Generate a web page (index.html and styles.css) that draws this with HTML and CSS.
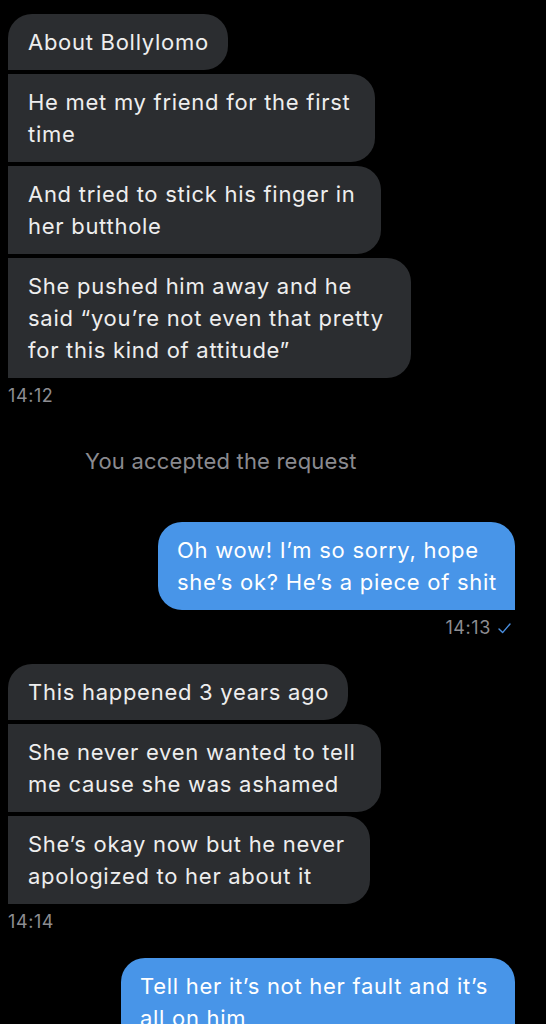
FILE: index.html
```html
<!DOCTYPE html>
<html>
<head>
<meta charset="utf-8">
<link rel="stylesheet" href="styles.css">
</head>
<body>
<div class="chat">
  <div class="group in">
    <div class="bubble first">About Bollylomo</div>
    <div class="bubble multi">He met my friend for the first<br>time</div>
    <div class="bubble multi">And tried to stick his finger in<br>her butthole</div>
    <div class="bubble multi wide last">She pushed him away and he<br>said “you’re not even that pretty<br>for this kind of attitude”</div>
  </div>
  <div class="time">14:12</div>

  <div class="system">You accepted the request</div>

  <div class="group out">
    <div class="bubble">Oh wow! I’m so sorry, hope<br>she’s ok? He’s a piece of shit</div>
  </div>
  <div class="time out-time">14:13
    <svg class="check" width="13" height="11" viewBox="0 0 13 11"><path d="M1 6 L4.6 9.6 L12 1" fill="none" stroke="#4a8fe0" stroke-width="1.4" stroke-linecap="round" stroke-linejoin="round"/></svg>
  </div>

  <div class="group in gap-top">
    <div class="bubble first">This happened 3 years ago</div>
    <div class="bubble multi">She never even wanted to tell<br>me cause she was ashamed</div>
    <div class="bubble multi last">She’s okay now but he never<br>apologized to her about it</div>
  </div>
  <div class="time">14:14</div>

  <div class="group out gap-top">
    <div class="bubble multi">Tell her it’s not her fault and it’s<br>all on him</div>
  </div>
</div>
</body>
</html>
```

FILE: styles.css
```css
html, body {
  margin: 0;
  padding: 0;
  background: #000;
}
body {
  font-family: Inter, "Noto Sans", sans-serif;
  color: #f2f2f2;
  width: 546px;
  height: 1024px;
  overflow: hidden;
}
.chat {
  display: flex;
  flex-direction: column;
  padding-top: 14px;
}
.group {
  display: flex;
  flex-direction: column;
  gap: 4px;
}
.group.in {
  align-items: flex-start;
  padding-left: 8px;
}
.group.out {
  align-items: flex-end;
  padding-right: 31px;
  margin-top: 45px;
}
.gap-top.in { margin-top: 26px; }
.gap-top.out { margin-top: 26px; }
.bubble {
  font-size: 22px;
  line-height: 32px;
  padding: 12px 19px 12px 20px;
  white-space: nowrap;
  letter-spacing: 0.72px;
}
.bubble.multi {
  padding-right: 25px;
}
.bubble.multi.wide {
  padding-right: 27px;
}
.in .bubble {
  background: #2b2d30;
  border-radius: 0 24px 24px 0;
  color: #eeeeee;
}
.in .bubble.first {
  border-radius: 24px 24px 24px 0;
}
.out .bubble {
  background: #4895e8;
  color: #fff;
  border-radius: 24px 24px 0 24px;
  padding-left: 19px;
  padding-right: 18px;
}
.out .bubble.multi {
  padding-right: 27px;
}
.time {
  font-size: 18px;
  line-height: 20px;
  letter-spacing: 0.6px;
  color: #8d8d92;
  margin-top: 8px;
  padding-left: 8px;
}
.out-time {
  display: flex;
  justify-content: flex-end;
  align-items: center;
  gap: 7px;
  padding-left: 0;
  padding-right: 35px;
}
.check { display: block; }
.system {
  font-size: 22px;
  line-height: 32px;
  letter-spacing: 0.2px;
  color: #8a8a8f;
  margin-top: 39px;
  padding-left: 85px;
}
```
